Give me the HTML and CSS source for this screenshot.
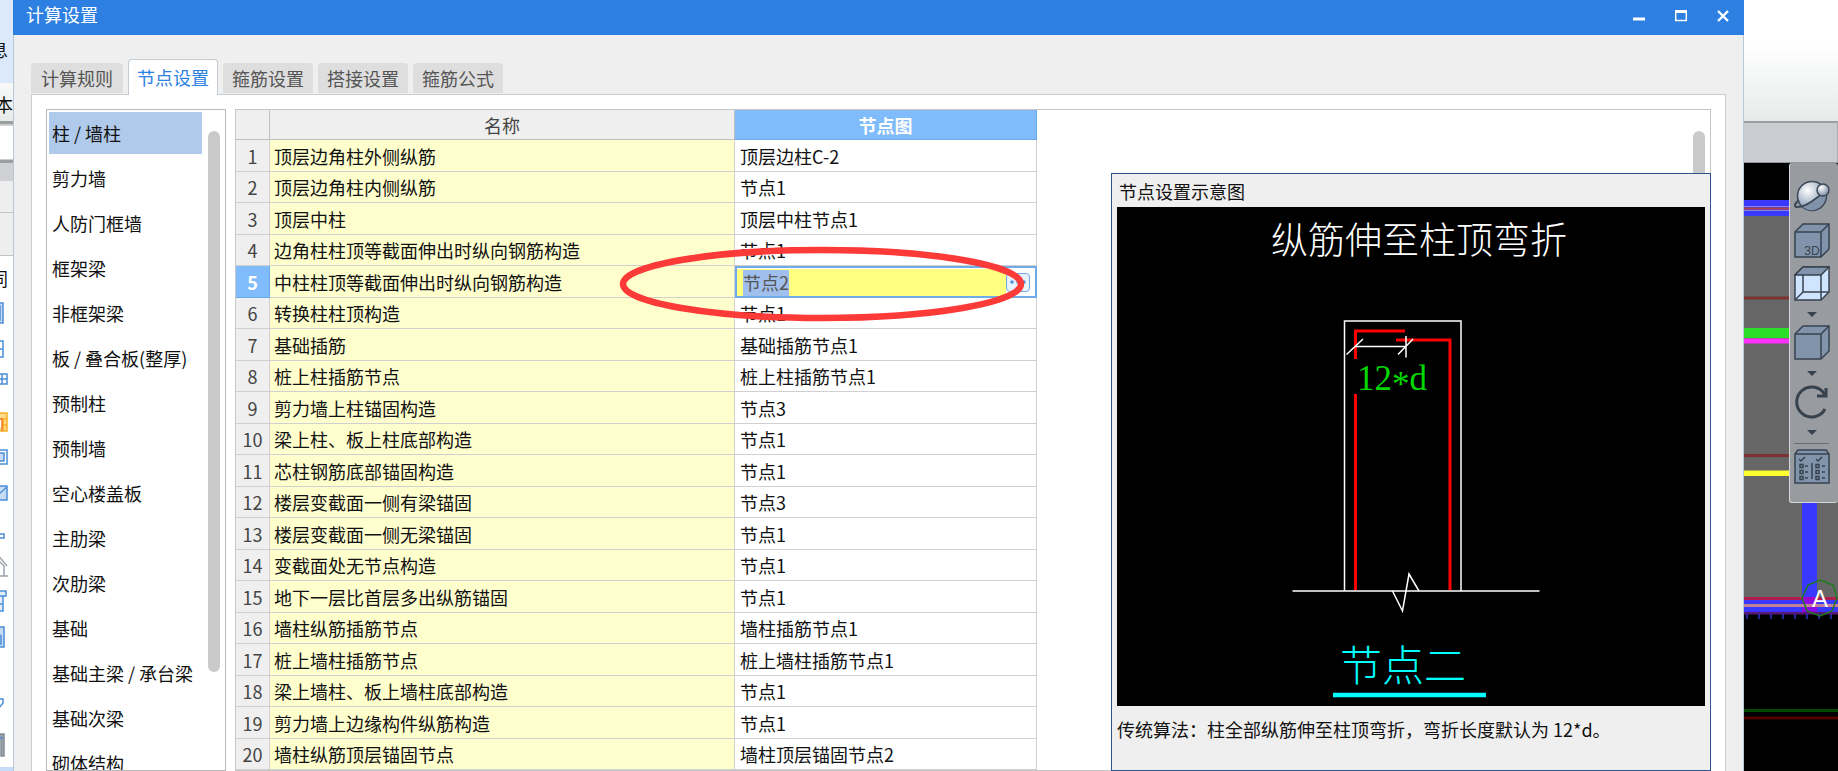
FILE: index.html
```html
<!DOCTYPE html>
<html lang="zh-CN">
<head>
<meta charset="utf-8">
<title>计算设置</title>
<link rel="stylesheet" href="styles.css">
</head>
<body>
<div class="app">
  <aside class="left-strip">
    <div class="ls-tab">息</div>
    <div class="ls-ribbon">本</div>
    <div class="ls-field"></div>
    <div class="ls-bar"></div>
    <div class="ls-head"></div>
    <div class="ls-head"></div>
    <div class="ls-group">同</div>
    <svg class="ls-icons" width="13" height="480" viewBox="0 291 13 480" fill="none" stroke="#4a8fd8" stroke-width="1.5">
      <path d="M-4 303H3V323H-4M-4 306H0V320H-4" fill="#c8dbf5"/>
      <path d="M-4 341H3V357H-4M-4 349H3"/>
      <path d="M-4 374H7V384H-4M-4 379H7M2 374V384"/>
      <path d="M-4 413H7V431H-4" fill="#ffd98a" stroke="#f8b020"/><path d="M0 419H7M3 425H7M3 419V431" stroke="#f8b020"/><path d="M-3 419H2V431" stroke="#f07820" fill="#fff"/>
      <path d="M-4 450H7V464H-4" fill="#fff"/><path d="M-4 453H4V461H-4" fill="#c8dbf5"/>
      <path d="M-4 486H7V500H-4" fill="#c8dbf5"/><path d="M-1 494L7 487"/>
      <path d="M-4 534H4V538H-4"/>
      <g stroke="#9aa3ab"><path d="M-3 554L7 566M-3 559L4 566V576M-4 576H8"/></g><path d="M-2 565V573" />
      <path d="M-4 591H6V596H-4M-4 596H3V611H-2M-2 604H3" fill="#e3edfa"/>
      <path d="M-4 627H4V647H-4" fill="#c8dbf5"/><path d="M-3 633L1 636V644H-4"/>
      <path d="M-4 699H3V703L-2 709"/>
      <path d="M-4 734H4V756H1V738H-4" fill="#9aa3ab" stroke="#858d94"/><path d="M-2 738H3"/>
      <path d="M-1 767H14V772H-1Z" fill="#c6dcf8" stroke="none"/>
    </svg>
  </aside>

  <main class="dialog">
    <header class="titlebar">
      <h1 class="title">计算设置</h1>
      <div class="win-buttons">
        <button type="button" aria-label="最小化"><svg width="14" height="14" viewBox="0 0 14 14"><path d="M1 10H13" stroke="#fff" stroke-width="3"/></svg></button>
        <button type="button" aria-label="最大化"><svg width="14" height="14" viewBox="0 0 14 14"><path d="M1.700 3V11.500H12.300V3" fill="none" stroke="#fff" stroke-width="1.500"/><path d="M1 2.500H13" stroke="#fff" stroke-width="3"/></svg></button>
        <button type="button" aria-label="关闭"><svg width="14" height="14" viewBox="0 0 14 14"><path d="M2 2L12 12M12 2L2 12" stroke="#fff" stroke-width="2.300"/></svg></button>
      </div>
    </header>

    <nav class="tabs" role="tablist">
      <button type="button" role="tab" class="tab">计算规则</button>
      <button type="button" role="tab" class="tab active" aria-selected="true">节点设置</button>
      <button type="button" role="tab" class="tab">箍筋设置</button>
      <button type="button" role="tab" class="tab">搭接设置</button>
      <button type="button" role="tab" class="tab">箍筋公式</button>
    </nav>

    <section class="page">
      <div class="list-box">
        <ul class="list">
          <li class="selected">柱 / 墙柱</li>
          <li>剪力墙</li>
          <li>人防门框墙</li>
          <li>框架梁</li>
          <li>非框架梁</li>
          <li>板 / 叠合板(整厚)</li>
          <li>预制柱</li>
          <li>预制墙</li>
          <li>空心楼盖板</li>
          <li>主肋梁</li>
          <li>次肋梁</li>
          <li>基础</li>
          <li>基础主梁 / 承台梁</li>
          <li>基础次梁</li>
          <li>砌体结构</li>
        </ul>
        <div class="scroll list-scroll"></div>
      </div>

      <div class="grid-box">
        <table class="grid">
          <colgroup><col class="c-num"><col class="c-name"><col class="c-node"></colgroup>
          <thead><tr><th></th><th>名称</th><th class="current">节点图</th></tr></thead>
          <tbody>
            <tr><th>1</th><td>顶层边角柱外侧纵筋</td><td>顶层边柱C-2</td></tr>
            <tr><th>2</th><td>顶层边角柱内侧纵筋</td><td>节点1</td></tr>
            <tr><th>3</th><td>顶层中柱</td><td>顶层中柱节点1</td></tr>
            <tr><th>4</th><td>边角柱柱顶等截面伸出时纵向钢筋构造</td><td>节点1</td></tr>
            <tr><th class="current">5</th><td>中柱柱顶等截面伸出时纵向钢筋构造</td><td class="editing"><div class="editor"><input type="text" value="节点2" aria-label="节点图"><button type="button" aria-label="更多"><svg width="20" height="16" viewBox="0 0 20 16" fill="#4a90dc"><circle cx="4" cy="8" r="1.700"/><circle cx="10" cy="8" r="1.700"/><circle cx="16" cy="8" r="1.700"/></svg></button></div></td></tr>
            <tr><th>6</th><td>转换柱柱顶构造</td><td>节点1</td></tr>
            <tr><th>7</th><td>基础插筋</td><td>基础插筋节点1</td></tr>
            <tr><th>8</th><td>桩上柱插筋节点</td><td>桩上柱插筋节点1</td></tr>
            <tr><th>9</th><td>剪力墙上柱锚固构造</td><td>节点3</td></tr>
            <tr><th>10</th><td>梁上柱、板上柱底部构造</td><td>节点1</td></tr>
            <tr><th>11</th><td>芯柱钢筋底部锚固构造</td><td>节点1</td></tr>
            <tr><th>12</th><td>楼层变截面一侧有梁锚固</td><td>节点3</td></tr>
            <tr><th>13</th><td>楼层变截面一侧无梁锚固</td><td>节点1</td></tr>
            <tr><th>14</th><td>变截面处无节点构造</td><td>节点1</td></tr>
            <tr><th>15</th><td>地下一层比首层多出纵筋锚固</td><td>节点1</td></tr>
            <tr><th>16</th><td>墙柱纵筋插筋节点</td><td>墙柱插筋节点1</td></tr>
            <tr><th>17</th><td>桩上墙柱插筋节点</td><td>桩上墙柱插筋节点1</td></tr>
            <tr><th>18</th><td>梁上墙柱、板上墙柱底部构造</td><td>节点1</td></tr>
            <tr><th>19</th><td>剪力墙上边缘构件纵筋构造</td><td>节点1</td></tr>
            <tr><th>20</th><td>墙柱纵筋顶层锚固节点</td><td>墙柱顶层锚固节点2</td></tr>
          </tbody>
        </table>
        <div class="scroll grid-scroll"></div>
        <svg class="mark" width="408" height="76" viewBox="0 0 408 76"><ellipse cx="204" cy="38" rx="199" ry="34" fill="none" stroke="#fc3b38" stroke-width="6.500"/></svg>

        <section class="preview">
          <h2>节点设置示意图</h2>
          <svg class="drawing" viewBox="0 0 588 499">
            <rect width="588" height="499" fill="#000"/>
            <text class="cad" x="302" y="47" font-size="37" fill="#fff" text-anchor="middle">纵筋伸至柱顶弯折</text>
            <g fill="none" stroke="#fff" stroke-width="1.500">
              <path d="M227.500 384V114H344V384M175.500 384H422.500"/>
            </g>
            <g fill="none" stroke="#f00" stroke-width="3">
              <path d="M238.500 152V124H288M238.500 187V383M279 133H333V383"/>
            </g>
            <g fill="none" stroke="#fff" stroke-width="1.500">
              <path d="M238.500 139.500H289M289 129V150.500M229.500 147.500L246 132M281 147.500L296 132"/>
              <path d="M275.500 384L285.500 404L292 367L302 384"/>
            </g>
            <text class="dim" x="240" y="183" font-size="35" fill="#00d800">12<tspan dy="6">*</tspan><tspan dy="-6">d</tspan></text>
            <text class="cad" x="286" y="474" font-size="42" fill="#0ff" text-anchor="middle">节点二</text>
            <path d="M216 488H369" stroke="#0ff" stroke-width="4.500"/>
          </svg>
          <p>传统算法：柱全部纵筋伸至柱顶弯折，弯折长度默认为 12*d。</p>
        </section>
      </div>
    </section>
  </main>

  <aside class="right-strip">
    <div class="rs-ribbon"></div>
    <div class="rs-bar"></div>
    <div class="viewport">
      <svg class="scene" width="94" height="608" viewBox="0 163 94 608">
        <rect y="163" width="94" height="608" fill="#000"/>
        <rect y="216" width="94" height="381" fill="#666"/>
        <rect y="200" width="94" height="16" fill="#3838ff"/>
        <path d="M0 206.500H94M0 210.500H94" stroke="#8d86e8"/><path d="M0 208.500H94" stroke="#b04444" stroke-width="2"/>
        <path d="M0 298H94M0 455.500H94" stroke="#7d3232" stroke-width="3"/>
        <rect y="328" width="94" height="10" fill="#2ade2a"/>
        <rect y="338.500" width="94" height="5" fill="#ff30ff"/>
        <rect y="470.500" width="94" height="5.500" fill="#ffff30"/>
        <rect x="58" y="503" width="15" height="94" fill="#3838ff"/>
        <rect y="597" width="94" height="3" fill="#b01e50"/>
        <rect y="600" width="94" height="12" fill="#3838ff"/>
        <rect y="612" width="94" height="2.500" fill="#5a1878"/>
        <path d="M58 597H73V612H58" fill="#a000e0" opacity=".8"/>
        <path d="M0 605.500H94" stroke="#c08098" stroke-width="3"/>
        <path d="M3 614V619M15 614V619M27 614V619M39 614V619M51 614V619M63 614V619M75 614V619M87 614V619" stroke="#3030d0" stroke-width="1.500"/>
        <path d="M76 580L89 585L93 598L88 611L76 616L63 611L58 598L64 585Z" fill="none" stroke="#1d7c1d" stroke-width="1.500"/>
        <path d="M0 710.500H94" stroke="#004800" stroke-width="3"/>
        <path d="M0 718H94" stroke="#500000" stroke-width="3"/>
        <text class="axis" x="76" y="607" text-anchor="middle">A</text>
      </svg>
      <div class="toolbar">
        <button type="button" aria-label="动态观察">
          <svg width="36" height="36" viewBox="0 0 36 36" stroke="#3c4858" stroke-width="1.500">
            <defs><radialGradient id="ball" cx=".35" cy=".3" r=".8"><stop offset="0" stop-color="#fff"/><stop offset=".5" stop-color="#b4c0d0"/><stop offset="1" stop-color="#71839a"/></radialGradient></defs>
            <circle cx="18" cy="16" r="14.500" fill="url(#ball)"/>
            <path d="M8 26Q19 24 31 13Q31 27 20 30Q12 31 8 26Z" fill="#8093ab" stroke="none"/>
            <path d="M5 20Q-1 25 2 27Q10 28 24 17L30 12" fill="none" stroke-width="2"/>
            <circle cx="29" cy="10" r="6" fill="url(#ball)"/>
          </svg>
        </button>
        <button type="button" aria-label="三维">
          <svg width="36" height="36" viewBox="0 0 36 36" fill="#8294ab" stroke="#37424f" stroke-width="1.500">
            <path d="M1 9L9 1H35V26L27 34H1Z"/><path d="M1 9H27V34M27 9L35 1" fill="none"/>
            <text class="label3d" x="18" y="32" text-anchor="middle">3D</text>
          </svg>
        </button>
        <button type="button" aria-label="线框">
          <svg width="36" height="36" viewBox="0 0 36 36" fill="#cfe4ff" stroke="#37424f" stroke-width="1.500">
            <path d="M1 9L9 1H35V26L27 34H1Z"/><path d="M1 9L9 1H35L27 9Z" fill="#8294ab"/><path d="M27 9V34M9 9V26H35M9 26L1 34" fill="none"/>
          </svg>
        </button>
        <button type="button" class="drop" aria-label="线框选项"><svg width="10" height="6" viewBox="0 0 10 6"><path d="M0 1H10L5 6Z" fill="#37424f"/></svg></button>
        <button type="button" aria-label="实体">
          <svg width="36" height="36" viewBox="0 0 36 36" fill="#8294ab" stroke="#37424f" stroke-width="1.500">
            <path d="M1 9L9 1H35V26L27 34H1Z"/><path d="M1 9H27V34M27 9L35 1" fill="none"/>
          </svg>
        </button>
        <button type="button" class="drop" aria-label="实体选项"><svg width="10" height="6" viewBox="0 0 10 6"><path d="M0 1H10L5 6Z" fill="#37424f"/></svg></button>
        <button type="button" aria-label="旋转">
          <svg width="36" height="36" viewBox="0 0 36 36" fill="none" stroke="#37424f" stroke-width="3">
            <path d="M31 25A15 15 0 1 1 31 11"/><path d="M32 4V12H23"/>
          </svg>
        </button>
        <button type="button" class="drop" aria-label="旋转选项"><svg width="10" height="6" viewBox="0 0 10 6"><path d="M0 1H10L5 6Z" fill="#37424f"/></svg></button>
        <hr>
        <button type="button" aria-label="显示设置">
          <svg width="36" height="36" viewBox="0 0 36 36" fill="none" stroke="#37424f" stroke-width="1.500">
            <path d="M1 5L4 1H32L35 5V34H1Z" fill="#8294ab"/><path d="M1 5H35"/>
            <path d="M5 10L7 12L11 8M22 10L24 12L28 8M18 14V30M11 17H14M11 23H14M11 29H14M28 17H31M28 23H31M28 29H31"/>
            <path d="M6 15.500H9V18.500H6ZM6 21.500H9V24.500H6ZM6 27.500H9V30.500H6ZM22 15.500H25V18.500H22ZM22 21.500H25V24.500H22ZM22 27.500H25V30.500H22Z"/>
          </svg>
        </button>
      </div>
    </div>
  </aside>
</div>
</body>
</html>
```

FILE: styles.css
```css
* { box-sizing: border-box; }

body {
  margin: 0;
  font: 18px/24px "Noto Sans CJK SC", sans-serif;
  color: #111;
  background: #fff;
}

button {
  font: inherit;
  color: inherit;
  border: 0;
  padding: 0;
  background: none;
}

svg { display: block; flex: none; }

.app {
  display: flex;
  height: 100vh;
  overflow: hidden;
}

/* Slice of the main window left of the dialog */
.left-strip {
  width: 13px;
  flex: none;
  overflow: hidden;
  background: #fff;
}
.left-strip > div {
  display: flex;
  align-items: center;
  justify-content: flex-end;
}
.ls-tab { height: 83px; padding: 14px 5px 0 0; background: #dce9fa; }
.ls-ribbon {
  height: 41px;
  padding-top: 4px;
  border-bottom: 3px solid #9b9ea1;
  background: linear-gradient(#f8faf9, #e6ebea);
}
.ls-field { height: 36px; border-top: 2px solid #cfcfcf; border-bottom: 1px solid #ccc; }
.ls-bar { height: 21px; border-top: 3px solid #9b9ea1; background: #cfd1d5; }
.ls-head { height: 32px; border-bottom: 1px solid #bfc3c8; background: #eee; }
.ls-head + .ls-head { height: 43px; }
.ls-group { height: 35px; padding: 8px 5px 0 0; }

/* Dialog */
.dialog {
  flex: 1;
  min-width: 0;
  display: flex;
  flex-direction: column;
  background: #efefef;
  box-shadow: inset 1px 0 #b9c6d8, inset -1px 0 #b9c6d8;
}
.titlebar {
  flex: none;
  height: 35px;
  display: flex;
  justify-content: space-between;
  padding-left: 13px;
  background: #2d80e2;
  color: #fff;
}
.title { margin: 0; font-size: 18px; font-weight: 400; line-height: 28px; }
.win-buttons { display: flex; height: 31px; }
.win-buttons button {
  width: 42px;
  display: flex;
  align-items: center;
  justify-content: center;
}

.tabs {
  flex: none;
  height: 59px;
  padding: 0 18px;
  display: flex;
  align-items: flex-end;
  gap: 5px;
}
.tab {
  width: 90px;
  height: 30px;
  margin-bottom: 1px;
  border-radius: 4px 4px 0 0;
  background: #dedede;
  color: #555;
}
.tab:first-child { width: 92px; }
.tab.active {
  height: 36px;
  margin-bottom: -1px;
  padding-bottom: 2px;
  z-index: 1;
  border: 1px solid #c3ccd4;
  border-bottom: 0;
  background: #fff;
  color: #2d80e2;
}

.page {
  flex: 1;
  min-height: 0;
  display: flex;
  gap: 9px;
  margin: 0 18px;
  padding: 14px 14px 0;
  border: solid #c8cdd2;
  border-width: 1px 1px 0;
  background: #fff;
}

.list-box {
  flex: none;
  width: 180px;
  display: flex;
  overflow: hidden;
  border: 1px solid #b9b9b9;
  padding: 2px 5px 0 2px;
}
.list { flex: 1; min-width: 0; margin: 0; padding: 0; list-style: none; }
.list li {
  width: 153px;
  height: 42px;
  margin-bottom: 3px;
  padding-left: 3px;
  line-height: 42px;
  white-space: nowrap;
}
.list .selected { background: #b0caec; }
.scroll { width: 12px; border-radius: 6px; background: #cacaca; }
.list-scroll { flex: none; height: 541px; margin-top: 19px; }

.grid-box {
  flex: 1;
  min-width: 0;
  position: relative;
  display: flex;
  justify-content: space-between;
  border: 1px solid #c6c6c6;
}
.grid {
  width: 801px;
  flex: none;
  align-self: flex-start;
  table-layout: fixed;
  border-collapse: separate;
  border-spacing: 0;
}
.c-num { width: 34px; }
.c-name { width: 465px; }
.c-node { width: 302px; }
.grid th, .grid td {
  height: 32px;
  padding: 0 0 0 5px;
  border: solid #d0d0d0;
  border-width: 0 1px 1px 0;
  line-height: 24px;
  text-align: left;
  white-space: nowrap;
}
.grid tbody tr:nth-child(even) > * { height: 31px; }
.grid th {
  padding: 0;
  background: #efefef;
  color: #444;
  font-weight: 400;
  text-align: center;
}
.grid thead th { height: 30px; border-color: #c0c0c0; }
.grid td:nth-child(2) { padding-left: 4px; background: #ffffce; }
.grid th.current {
  background: #80bbfb;
  border-color: #6aa9ea;
  color: #fff;
  font-weight: 700;
}
.grid td.editing { padding: 0; border: 0; }
.editor {
  display: flex;
  align-items: center;
  height: 32px;
  padding-right: 5px;
  border: 2px solid #6fabe8;
  background: #fff;
}
.editor input {
  flex: 1;
  min-width: 0;
  height: 27px;
  border: 0;
  padding: 0 0 0 6px;
  font: inherit;
  color: #555;
  background: linear-gradient(#a0bfec, #a0bfec) 6px 1px / 46px 26px no-repeat #ffff80;
}
.editor button {
  width: 24px;
  height: 19px;
  display: flex;
  align-items: center;
  justify-content: center;
  border: 1px solid #6fabe8;
  border-radius: 4px;
  background: #e8f2fd;
}
.grid-scroll { height: 600px; margin: 21px 5px 0 0; }

.mark { position: absolute; left: 382px; top: 136px; }

.preview {
  position: absolute;
  right: -1px;
  top: 63px;
  bottom: -1px;
  width: 600px;
  padding: 0 5px;
  border: 1px solid #2f5590;
  background: #efefef;
}
.preview h2 {
  margin: 0;
  padding: 5px 0 4px 2px;
  font-size: 18px;
  font-weight: 400;
  line-height: 24px;
}
.preview p { margin: 11px 0 0; white-space: nowrap; }
.drawing { width: 100%; }
.cad { font-family: "Noto Sans CJK SC", sans-serif; font-weight: 300; }
.dim { font-family: "Liberation Serif", serif; }

/* Slice of the main window right of the dialog */
.right-strip {
  width: 94px;
  flex: none;
  display: flex;
  flex-direction: column;
}
.rs-ribbon {
  height: 121px;
  flex: none;
  background: linear-gradient(#fff 45px, #e6ebea);
}
.rs-bar {
  height: 42px;
  flex: none;
  border-top: 2px solid #9b9fa2;
  border-bottom: 1px solid #94989b;
  border-right: 1px solid #a8abae;
  background: #c9ccd1;
}
.viewport { flex: 1; position: relative; overflow: hidden; background: #000; }
.axis { font: 24px "Liberation Sans", sans-serif; fill: #fff; }
.label3d { font: 12px "Liberation Sans", sans-serif; fill: #37424f; stroke: none; }
.toolbar {
  position: absolute;
  right: 0;
  top: 0;
  width: 49px;
  height: 340px;
  display: flex;
  flex-direction: column;
  align-items: flex-start;
  padding: 17px 0 0 4px;
  border: solid #d4d6d8;
  border-width: 0 0 1px 1px;
  border-radius: 3px;
  background: #989ba0;
}
.toolbar button + button:not(.drop) { margin-top: 7px; }
.toolbar .drop {
  width: 36px;
  height: 23px;
  display: flex;
  align-items: center;
  justify-content: center;
}
.toolbar .drop + button:not(.drop) { margin-top: 0; }
.toolbar hr { width: 35px; margin: 0 0 5px; border: 0; border-top: 1px solid #6c6c6c; }
```
